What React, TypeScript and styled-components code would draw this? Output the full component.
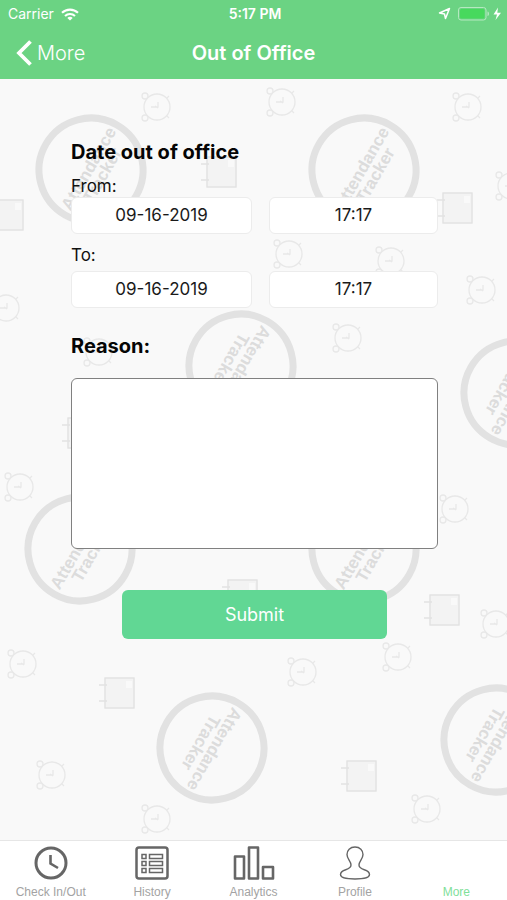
import React, { useState } from "react";
import styled, { createGlobalStyle } from "styled-components";

const GlobalStyle = createGlobalStyle`
  *, *::before, *::after { box-sizing: border-box; }
  body { margin: 0; background: #f9f9f9; }
  body, button, input, textarea { font-family: Inter, "Liberation Sans", sans-serif; }
`;

const Screen = styled.div`
  display: flex;
  flex-direction: column;
  min-height: 100vh;
`;

const Header = styled.header`
  background: #6bd383;
  color: #fff;
`;

const StatusBar = styled.div`
  display: grid;
  grid-template-columns: 1fr auto 1fr;
  align-items: center;
  height: 28px;
  padding: 0 5px 0 8px;
  font-size: 14px;
  line-height: 20px;
`;

const StatusGroup = styled.div<{ $end?: boolean }>`
  display: flex;
  align-items: center;
  gap: 7px;
  justify-content: ${(p) => (p.$end ? "flex-end" : "flex-start")};
`;

const Clock = styled.span`
  font-size: 14px;
  font-weight: 600;
`;

const NavBar = styled.nav`
  display: grid;
  grid-template-columns: 1fr auto 1fr;
  align-items: center;
  height: 51px;
  padding: 0 16px 2px;
`;

const BackButton = styled.button`
  display: flex;
  align-items: center;
  gap: 5px;
  justify-self: start;
  padding: 0;
  border: 0;
  background: none;
  color: inherit;
  font-size: 20px;
  font-weight: 300;
  line-height: 28px;
  cursor: pointer;
`;

const Title = styled.h1`
  margin: 0;
  font-size: 20px;
  font-weight: 600;
  line-height: 28px;
`;

const Main = styled.main`
  position: relative;
  flex: 1;
  overflow: hidden;
  background: #f9f9f9;
`;

const Pattern = styled.svg`
  position: absolute;
  inset: 0;
  width: 100%;
  height: 100%;
  pointer-events: none;
`;

const Form = styled.form`
  position: relative;
  display: flex;
  flex-direction: column;
  padding: 59px 69px 32px 71px;
`;

const Heading = styled.h2`
  margin: 0;
  color: #050505;
  font-size: 20px;
  font-weight: 700;
  line-height: 28px;
`;

const FieldLabel = styled.label`
  color: #111;
  font-size: 17px;
  line-height: 22px;
`;

const Period = styled.div`
  display: flex;
  flex-direction: column;
`;

const FromPeriod = styled(Period)`
  margin-bottom: 10px;
  padding-top: 9px;
`;

const ToPeriod = styled(Period)`
  gap: 5px;
  margin-bottom: 24px;
`;

const FieldRow = styled.div`
  display: grid;
  grid-template-columns: 15fr 14fr;
  gap: 17px;
`;

const Field = styled.input`
  width: 100%;
  min-width: 0;
  height: 37px;
  padding: 0 8px 2px;
  border: 1px solid #ececec;
  border-radius: 6px;
  background: #fff;
  color: #1a1a1a;
  font-size: 17px;
  text-align: center;
`;

const ReasonLabel = styled.label`
  color: #050505;
  font-size: 20px;
  font-weight: 700;
  line-height: 28px;
`;

const ReasonBox = styled.textarea`
  width: 100%;
  height: 171px;
  margin-top: 18px;
  padding: 10px;
  border: 1px solid #808080;
  border-radius: 6px;
  background: #fff;
  font-size: 17px;
  resize: none;
`;

const SubmitButton = styled.button`
  align-self: center;
  width: 72%;
  height: 49px;
  margin-top: 41px;
  border: 0;
  border-radius: 6px;
  background: #61d794;
  color: #fff;
  font-size: 18px;
  cursor: pointer;
`;

const TabBar = styled.nav`
  display: flex;
  height: 60px;
  border-top: 1px solid #e6e6e6;
  background: #fff;
`;

const Tab = styled.a<{ $active?: boolean }>`
  display: flex;
  flex: 1;
  flex-direction: column;
  align-items: center;
  gap: 3px;
  padding-top: 4px;
  color: ${(p) => (p.$active ? "#7fe09a" : "#a3a3a3")};
  font-family: "Liberation Sans", Arial, sans-serif;
  font-size: 12px;
  line-height: 16px;
  text-decoration: none;
`;

const TabIcon = styled.svg`
  width: 42px;
  height: 36px;
  fill: none;
  stroke: #666;
  stroke-width: 3;
`;

type Point = [number, number];

const stampsUp: Point[] = [[91, 170], [364, 170], [80, 549], [364, 549]];
const stampsDown: Point[] = [[241, 366], [516, 393], [212, 748], [496, 740]];
const alarms: Point[] = [
  [157, 107], [282, 102], [468, 107], [511, 186], [289, 254], [391, 261], [482, 290],
  [6, 308], [99, 352], [348, 338], [20, 487], [455, 509], [496, 624], [23, 664],
  [303, 672], [398, 657], [52, 775], [157, 819], [427, 809],
];
const books: Point[] = [
  [207, 157], [-6, 200], [443, 193], [430, 595], [228, 580], [105, 678], [347, 761], [68, 418],
];

const Stamp = ({ at, angle }: { at: Point; angle: number }) => (
  <g transform={`translate(${at[0]} ${at[1]}) rotate(${angle})`}>
    <circle r="52" fill="none" stroke="#e2e2e2" strokeWidth="7" />
    <g fill="#dcdcdc" fontFamily="Liberation Sans, Arial, sans-serif" fontWeight="700" fontSize="17" textAnchor="middle">
      <text y="3">Attendance</text>
      <text x="1" y="18">Tracker</text>
    </g>
  </g>
);

const Alarm = ({ at }: { at: Point }) => (
  <g transform={`translate(${at[0]} ${at[1]})`} fill="none" stroke="#e8e8e8" strokeWidth="1.3">
    <circle r="13" />
    <circle cx="-12" cy="-11" r="3" />
    <circle cx="-12" cy="11" r="3" />
    <path d="M-6 0H1V-5M-2 -1L1 1M10 -9L12 -11M10 9L12 11" />
  </g>
);

const Book = ({ at }: { at: Point }) => (
  <g transform={`translate(${at[0]} ${at[1]})`} fill="none" stroke="#e2e2e2" strokeWidth="1.4">
    <rect width="29" height="30" fill="#f3f3f3" />
    <path d="M-6 7H2M-6 23H2" />
    <rect x="21" y="3" width="6" height="7" fill="#f9f9f9" stroke="none" />
  </g>
);

const BackgroundPattern = () => (
  <Pattern viewBox="0 79 507 761" preserveAspectRatio="xMidYMin slice" aria-hidden="true">
    {alarms.map((p) => <Alarm key={p.join()} at={p} />)}
    {books.map((p) => <Book key={p.join()} at={p} />)}
    {stampsUp.map((p) => <Stamp key={p.join()} at={p} angle={-60} />)}
    {stampsDown.map((p) => <Stamp key={p.join()} at={p} angle={120} />)}
  </Pattern>
);

const WifiIcon = () => (
  <svg width="18" height="13" viewBox="0 0 18 13" fill="none" stroke="#fff" strokeWidth="2.1" aria-hidden="true">
    <path d="M1 4.8C5.5 .5 12.5 .5 17 4.8" />
    <path d="M4 8C6.8 5.3 11.2 5.3 14 8" />
    <path d="M9 12.5L6.3 9.9C7.8 8.5 10.2 8.5 11.7 9.9Z" fill="#fff" stroke="none" />
  </svg>
);

const StatusIcons = () => (
  <svg width="64" height="16" viewBox="0 0 64 16" fill="none" aria-label="Location on, battery charging" role="img">
    <path d="M1.500 7L11.500 2.500L7.500 12.500L6.500 8Z" stroke="#fff" strokeWidth="1.500" strokeLinejoin="round" />
    <rect x="20.500" y="1.500" width="27.500" height="12.500" rx="2.500" stroke="#b5e9c0" />
    <rect x="22" y="3" width="24.500" height="9.500" rx="1.500" fill="#47d95d" />
    <path d="M49.500 5.500C51.500 6 51.500 9.500 49.500 10Z" fill="#b5e9c0" />
    <path d="M60 1.500L55.500 8.500H59L57.500 14L63 6.700H59.300Z" fill="#fff" />
  </svg>
);

export default function App() {
  const [fromDate, setFromDate] = useState("09-16-2019");
  const [fromTime, setFromTime] = useState("17:17");
  const [toDate, setToDate] = useState("09-16-2019");
  const [toTime, setToTime] = useState("17:17");
  const [reason, setReason] = useState("");

  return (
    <>
      <GlobalStyle />
      <Screen>
        <Header>
          <StatusBar>
            <StatusGroup>
              <span>Carrier</span>
              <WifiIcon />
            </StatusGroup>
            <Clock>5:17 PM</Clock>
            <StatusGroup $end>
              <StatusIcons />
            </StatusGroup>
          </StatusBar>
          <NavBar>
            <BackButton type="button">
              <svg width="16" height="26" viewBox="0 0 16 26" fill="none" stroke="#fff" strokeWidth="3.8" aria-hidden="true">
                <path d="M14.500 1.500L3 13L14.500 24.500" />
              </svg>
              More
            </BackButton>
            <Title>Out of Office</Title>
          </NavBar>
        </Header>

        <Main>
          <BackgroundPattern />
          <Form onSubmit={(e) => e.preventDefault()}>
            <Heading>Date out of office</Heading>
            <FromPeriod>
              <FieldLabel htmlFor="from-date">From:</FieldLabel>
              <FieldRow>
                <Field id="from-date" value={fromDate} onChange={(e) => setFromDate(e.target.value)} />
                <Field aria-label="From time" value={fromTime} onChange={(e) => setFromTime(e.target.value)} />
              </FieldRow>
            </FromPeriod>
            <ToPeriod>
              <FieldLabel htmlFor="to-date">To:</FieldLabel>
              <FieldRow>
                <Field id="to-date" value={toDate} onChange={(e) => setToDate(e.target.value)} />
                <Field aria-label="To time" value={toTime} onChange={(e) => setToTime(e.target.value)} />
              </FieldRow>
            </ToPeriod>
            <ReasonLabel htmlFor="reason">Reason:</ReasonLabel>
            <ReasonBox id="reason" value={reason} onChange={(e) => setReason(e.target.value)} />
            <SubmitButton type="submit">Submit</SubmitButton>
          </Form>
        </Main>

        <TabBar>
          <Tab href="#check">
            <TabIcon viewBox="0 0 42 36" aria-hidden="true">
              <circle cx="21" cy="18" r="15" />
              <path d="M20.500 10V18.500L28 23" strokeWidth="2.6" />
            </TabIcon>
            Check In/Out
          </Tab>
          <Tab href="#history">
            <TabIcon viewBox="0 0 42 36" aria-hidden="true">
              <rect x="5.500" y="2.500" width="31" height="31" rx="2.500" strokeWidth="2.500" />
              <g strokeWidth="1.500">
                <path d="M11 9.500h4v4h-4zM11 16.500h4v4h-4zM11 23.500h4v4h-4z" />
                <path d="M18.500 9.500h13v4h-13zM18.500 16.500h13v4h-13zM18.500 23.500h13v4h-13z" />
              </g>
            </TabIcon>
            History
          </Tab>
          <Tab href="#analytics">
            <TabIcon viewBox="0 0 42 36" aria-hidden="true">
              <g strokeWidth="2.600" strokeLinejoin="round">
                <rect x="2" y="11.500" width="9" height="22" />
                <rect x="16" y="2.500" width="9" height="31" />
                <rect x="30" y="22" width="10" height="11.500" />
              </g>
            </TabIcon>
            Analytics
          </Tab>
          <Tab href="#profile">
            <TabIcon viewBox="0 0 42 36" aria-hidden="true">
              <path
                strokeWidth="1.400"
                d="M21 2C16 2 13 5.500 13 9.500C13 14 17 16 17 20C17 26 6.500 23.500 6.500 29.500C6.500 33 14 34 21 34C28 34 35.500 33 35.500 29.500C35.500 23.500 25 26 25 20C25 16 29 14 29 9.500C29 5.500 26 2 21 2Z"
              />
            </TabIcon>
            Profile
          </Tab>
          <Tab href="#more" $active aria-current="page">
            <TabIcon viewBox="0 0 42 36" aria-hidden="true" />
            More
          </Tab>
        </TabBar>
      </Screen>
    </>
  );
}
